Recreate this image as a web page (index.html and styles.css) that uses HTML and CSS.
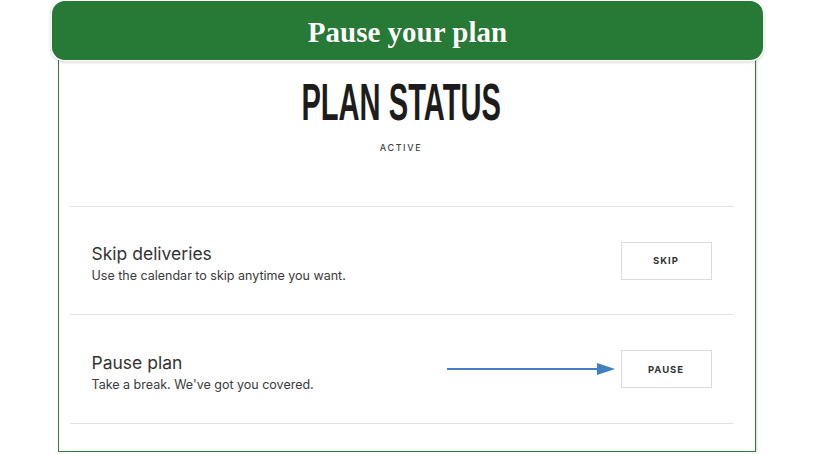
FILE: index.html
```html
<!DOCTYPE html>
<html lang="en">
<head>
	<meta charset="UTF-8">
	<title>Pause your plan</title>
	<link rel="stylesheet" href="styles.css">
</head>
<body>
	<div class="frame">
		<!-- 绿色标题条 -->
		<div class="banner">Pause your plan</div>
		<!-- 白色卡片 -->
		<div class="card">
			<div class="status">
				<h1 class="statusTitle"><span>PLAN STATUS</span></h1>
				<p class="statusText">ACTIVE</p>
			</div>
			<div class="row">
				<div class="rowText">
					<h2>Skip deliveries</h2>
					<p>Use the calendar to skip anytime you want.</p>
				</div>
				<a class="btn" href="##">SKIP</a>
			</div>
			<div class="row last">
				<div class="rowText">
					<h2>Pause plan</h2>
					<p>Take a break. We've got you covered.</p>
				</div>
				<svg class="arrow" width="168" height="14" viewBox="0 0 168 14">
					<line x1="0" y1="7" x2="152" y2="7" stroke="#3f7fc2" stroke-width="2"/>
					<polygon points="150,1 168,7 150,13" fill="#3f7fc2"/>
				</svg>
				<a class="btn" href="##">PAUSE</a>
			</div>
		</div>
	</div>
</body>
</html>
```

FILE: styles.css
```css
*{
	margin: 0;
	padding: 0;
	box-sizing: border-box;
}
body{
	background: #fff;
	font-family: Inter, "Noto Sans", sans-serif;
	color: #333;
}
a{
	text-decoration: none;
	color: #333;
}
.frame{
	width: 711px;
	margin-left: 52px;
	padding-top: 1px;
}
/*标题条*/
.banner{
	height: 59px;
	background: #267a36;
	border-radius: 13px;
	box-shadow: 0 0 0 1.5px #fff, 0 1px 3px 1px rgba(0,0,0,.25);
	display: flex;
	align-items: center;
	justify-content: center;
	padding-top: 3px;
	color: #fff;
	font: bold 29px "Liberation Serif", serif;
	text-shadow: 0 0 1px rgba(0,0,0,.3);
	position: relative;
}
/*卡片*/
.card{
	margin: 0 7px 0 6px;
	border: 1.5px solid #2e7d3c;
	border-top: none;
	padding: 0 22.5px 27px 10.5px;
	box-shadow: 1px 1px 2px rgba(0,0,0,.15);
}
.status{
	text-align: center;
	padding: 16px 0 52px;
}
.statusTitle{
	height: 52px;
	font: bold 52px/52px "Liberation Sans", Arial, sans-serif;
	color: #1c1c1c;
}
.statusTitle span{
	display: inline-block;
	transform: scaleX(0.56);
}
.statusText{
	margin-top: 14px;
	font-size: 9px;
	line-height: 12px;
	font-weight: 500;
	letter-spacing: 1.6px;
	color: #444;
}
/*选项行*/
.row{
	height: 108px;
	border-top: 1px solid #e2e2e2;
	display: flex;
	align-items: center;
	padding: 0 21px 0 22px;
}
.row.last{
	height: 110px;
	border-bottom: 1px solid #e2e2e2;
}
.rowText{
	flex: 1;
	padding-top: 6px;
}
.rowText h2{
	font-size: 17.5px;
	line-height: 22px;
	font-weight: 400;
	color: #333;
}
.rowText p{
	margin-top: 2px;
	font-size: 12.5px;
	line-height: 17px;
	color: #3a3a3a;
}
.arrow{
	display: block;
	margin-right: 6px;
}
.btn{
	width: 91px;
	height: 38px;
	border: 1px solid #dcdcdc;
	display: flex;
	align-items: center;
	justify-content: center;
	font-size: 9.5px;
	font-weight: 700;
	letter-spacing: 1px;
	color: #333;
}
```
